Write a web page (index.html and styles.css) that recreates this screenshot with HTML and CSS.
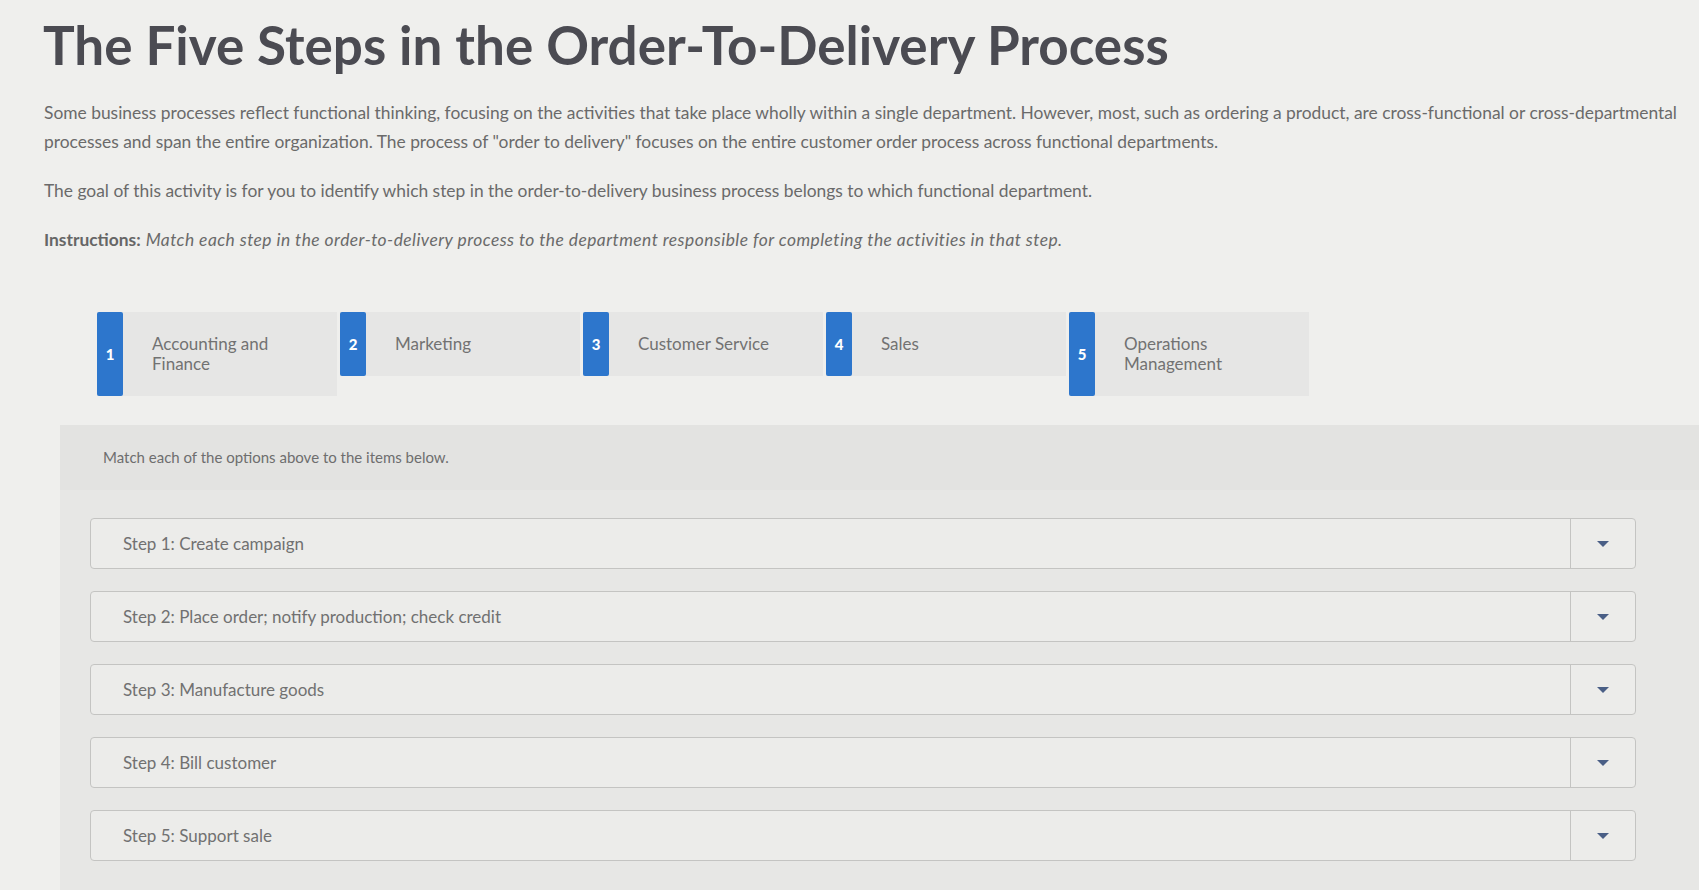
FILE: index.html
```html
<!DOCTYPE html>
<html>
<head>
<meta charset="utf-8">
<link rel="stylesheet" href="styles.css">
</head>
<body>
<div class="page">
  <h1 class="title">The Five Steps in the Order-To-Delivery Process</h1>
  <p class="para p1">Some business processes reflect functional thinking, focusing on the activities that take place wholly within a single department. However, most, such as ordering a product, are cross-functional or cross-departmental<br>processes and span the entire organization. The process of "order to delivery" focuses on the entire customer order process across functional departments.</p>
  <p class="para p2">The goal of this activity is for you to identify which step in the order-to-delivery business process belongs to which functional department.</p>
  <p class="para p3"><b>Instructions:</b> <i>Match each step in the order-to-delivery process to the department responsible for completing the activities in that step.</i></p>

  <div class="options">
    <div class="option"><div class="num">1</div><div class="label">Accounting and<br>Finance</div></div>
    <div class="option"><div class="num">2</div><div class="label">Marketing</div></div>
    <div class="option"><div class="num">3</div><div class="label">Customer Service</div></div>
    <div class="option"><div class="num">4</div><div class="label">Sales</div></div>
    <div class="option"><div class="num">5</div><div class="label">Operations<br>Management</div></div>
  </div>

  <div class="panel">
    <div class="panel-head">Match each of the options above to the items below.</div>
    <div class="rows">
      <div class="row"><div class="row-text">Step 1: Create campaign</div><div class="row-btn"><span class="caret"></span></div></div>
      <div class="row"><div class="row-text">Step 2: Place order; notify production; check credit</div><div class="row-btn"><span class="caret"></span></div></div>
      <div class="row"><div class="row-text">Step 3: Manufacture goods</div><div class="row-btn"><span class="caret"></span></div></div>
      <div class="row"><div class="row-text">Step 4: Bill customer</div><div class="row-btn"><span class="caret"></span></div></div>
      <div class="row"><div class="row-text">Step 5: Support sale</div><div class="row-btn"><span class="caret"></span></div></div>
    </div>
  </div>
</div>
</body>
</html>
```

FILE: styles.css
```css
html, body {
  margin: 0;
  padding: 0;
  background: #efefed;
  font-family: Lato, "Open Sans", sans-serif;
  overflow: hidden;
}
.page {
  width: 1699px;
  height: 890px;
  overflow: hidden;
}
.title {
  margin: 12px 0 0 43px;
  font-size: 53px;
  line-height: 65px;
  font-weight: 700;
  color: #4b4b52;
}
.para {
  margin: 0 0 0 44px;
  font-size: 17.4px;
  line-height: 29px;
  color: #6a6a6a;
  white-space: nowrap;
}
.p1 { margin-top: 21px; }
.p2 { margin-top: 20px; }
.p3 { margin-top: 20px; letter-spacing: 0.45px; }
.p3 b { font-weight: 700; color: #666; letter-spacing: 0; }
.options {
  display: flex;
  align-items: flex-start;
  gap: 3px;
  margin: 58px 0 0 97px;
}
.option {
  display: flex;
  width: 240px;
  background: #e6e6e5;
}
.num {
  width: 26px;
  flex: none;
  background: #2d76cc;
  color: #fff;
  font-weight: 900;
  font-size: 15px;
  display: flex;
  align-items: center;
  justify-content: center;
  border-radius: 2px;
}
.label {
  padding: 22px 10px 22px 29px;
  font-size: 17px;
  line-height: 20px;
  color: #727272;
}
.panel {
  margin: 29px 0 0 60px;
  background: #e7e7e5;
  height: 470px;
}
.panel-head {
  padding: 23px 0 0 43px;
  height: 42px;
  font-size: 15px;
  line-height: 18px;
  color: #6e6e6e;
  background: #e3e3e1;
}
.rows {
  display: flex;
  flex-direction: column;
  gap: 22px;
  padding: 28px 0 0 30px;
}
.row {
  display: flex;
  width: 1546px;
  height: 51px;
  border: 1px solid #c4c4c2;
  border-radius: 4px;
  background: #ececea;
  box-sizing: border-box;
}
.row-text {
  flex: 1;
  display: flex;
  align-items: center;
  padding-left: 32px;
  font-size: 17px;
  color: #717171;
}
.row-btn {
  width: 64px;
  border-left: 1px solid #c4c4c2;
  display: flex;
  align-items: center;
  justify-content: center;
}
.caret {
  width: 0;
  height: 0;
  border-left: 6px solid transparent;
  border-right: 6px solid transparent;
  border-top: 6px solid #4a5f86;
}
```
